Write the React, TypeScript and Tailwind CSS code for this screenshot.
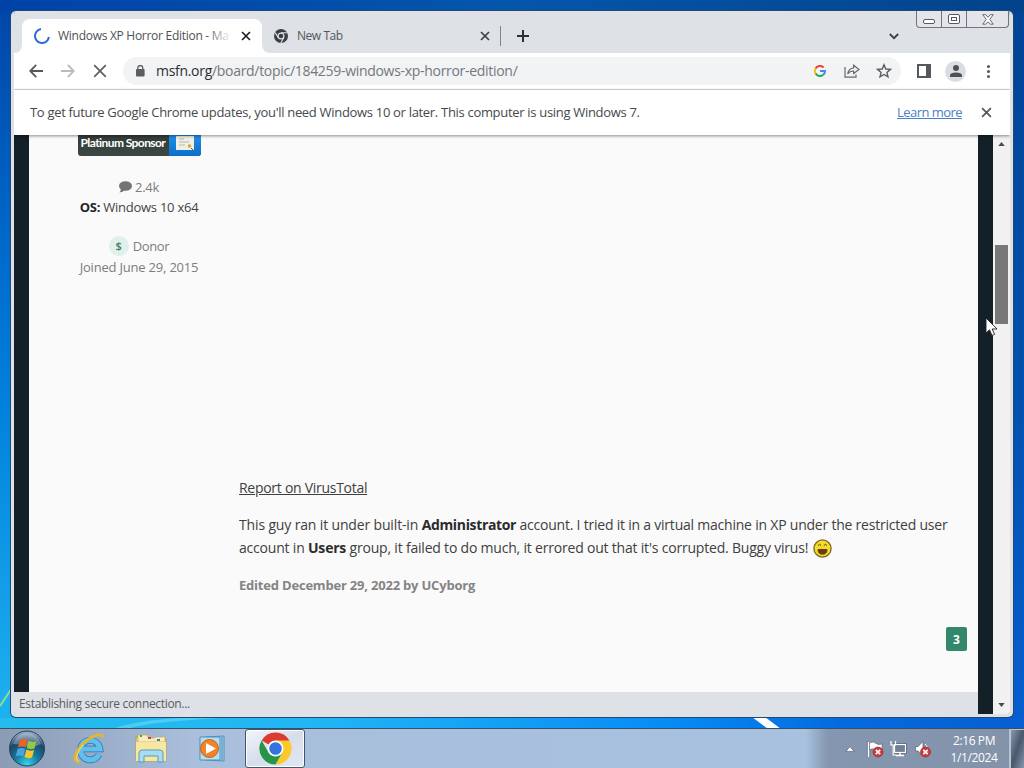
import React from "react";

const ui = "font-['Open_Sans','Noto_Sans',sans-serif]";

function Cross({ size, width, color }: { size: number; width: number; color: string }) {
  return (
    <svg width={size} height={size} viewBox="0 0 10 10" stroke={color} strokeWidth={width} fill="none" className="shrink-0">
      <path d="M1 1L9 9M9 1L1 9" />
    </svg>
  );
}

function TabStrip() {
  return (
    <div className="flex h-[42px] shrink-0 items-start bg-[#dee1e6]">
      <div className="mt-[8px] flex h-[34px] w-[6px] items-end">
        <svg width="9" height="9" viewBox="0 0 9 9" className="shrink-0">
          <path d="M0 9Q8 9 8 0H9V9Z" fill="#fff" />
        </svg>
      </div>
      <div className="ml-[2px] mt-[8px] flex h-[34px] w-[240px] items-center rounded-t-[8px] bg-white pl-[12px]">
        <svg width="16" height="16" viewBox="0 0 16 16" fill="none" stroke="#2e6bd6" strokeWidth="2" className="shrink-0">
          <path d="M7 1.1A7 7 0 1 0 14.9 9" />
        </svg>
        <div className="relative ml-[8px] w-[174px] overflow-hidden whitespace-nowrap text-[12px] leading-[18px] tracking-[-0.28px] text-[#4d5155]">
          Windows XP Horror Edition - Ma
          <div className="absolute inset-y-0 right-0 w-[26px] bg-linear-to-r from-white/0 to-white" />
        </div>
        <div className="ml-[9px] flex">
          <Cross size={10} width={1.7} color="#202124" />
        </div>
      </div>
      <svg width="9" height="9" viewBox="0 0 9 9" className="mt-[33px] shrink-0">
        <path d="M9 9Q0 9 0 0V9Z" fill="#fff" />
      </svg>
      <div className="ml-[3px] mt-[8px] flex h-[34px] w-[226px] items-center">
        <svg width="14" height="14" viewBox="0 0 14 14" className="shrink-0">
          <circle cx="7" cy="7" r="7" fill="#3c4043" />
          <circle cx="7" cy="7" r="2.9" fill="none" stroke="#dee1e6" strokeWidth="1.2" />
          <path d="M7 3.8H13.2M4.3 8.7L1.2 3.6M9.8 8.5L6.8 14" stroke="#dee1e6" strokeWidth="1.1" />
        </svg>
        <span className="ml-[9px] w-[183px] text-[12px] leading-[18px] tracking-[-0.45px] text-[#54575b]">New Tab</span>
        <Cross size={10} width={1.7} color="#3c4043" />
      </div>
      <div className="mt-[15px] h-[20px] w-px bg-[#80858b]" />
      <svg width="12" height="12" viewBox="0 0 12 12" stroke="#2d3034" strokeWidth="2" className="ml-[16px] mt-[19px]">
        <path d="M6 0V12M0 6H12" />
      </svg>
      <svg width="10" height="7" viewBox="0 0 10 7" stroke="#3c4043" strokeWidth="1.8" fill="none" className="ml-[360px] mt-[22px]">
        <path d="M0.8 1L5 5.2L9.2 1" />
      </svg>
      <div className="ml-[17px] flex h-[17px] w-[93px] rounded-b-[4px] border border-t-0 border-[#70747b] bg-[#e3e5ea]">
        <div className="flex w-[25px] items-center justify-center border-r border-[#70747b] pt-[5px]">
          <div className="h-[5px] w-[12px] rounded-[2px] border border-[#555a61] bg-white" />
        </div>
        <div className="flex w-[25px] items-center justify-center border-r border-[#70747b]">
          <div className="flex h-[10px] w-[12px] items-center justify-center rounded-[2px] border border-[#555a61] bg-white">
            <div className="h-[4px] w-[6px] border border-[#555a61]" />
          </div>
        </div>
        <div className="flex grow items-center justify-center">
          <svg width="12" height="11" viewBox="0 0 12 11" fill="#fff" stroke="#555a61" strokeWidth=".9">
            <path d="M0.8 0.7H3.7L6 3.2L8.3 0.7H11.2L7.8 5.4L11.2 10.2H8.3L6 7.7L3.7 10.2H0.8L4.2 5.4Z" />
          </svg>
        </div>
      </div>
    </div>
  );
}

function Toolbar() {
  return (
    <div className="flex h-[37px] shrink-0 items-center border-b border-[#d6d8da] bg-white">
      <svg width="14" height="14" viewBox="0 0 14 14" fill="none" stroke="#55585c" strokeWidth="1.8" className="ml-[15px]">
        <path d="M14 7H1.5M7.2 0.8L1.2 7L7.2 13.2" />
      </svg>
      <svg width="14" height="14" viewBox="0 0 14 14" fill="none" stroke="#b9bbbe" strokeWidth="1.8" className="ml-[18px]">
        <path d="M0 7H12.5M6.8 0.8L12.8 7L6.8 13.2" />
      </svg>
      <svg width="14" height="14" viewBox="0 0 14 14" stroke="#5b5e62" strokeWidth="1.7" className="ml-[18px]">
        <path d="M1.2 1.2L12.8 12.8M12.8 1.2L1.2 12.8" />
      </svg>
      <div className="ml-[16px] flex h-[28px] w-[778px] items-center rounded-full bg-[#f1f3f4]">
        <svg width="10" height="12" viewBox="0 0 10 12" className="ml-[12px] shrink-0">
          <rect x="1" y="4" width="8.6" height="7.6" rx="1" fill="#5a5d61" />
          <path d="M2.8 4.5V3A2.5 2.5 0 0 1 7.8 3V4.5" fill="none" stroke="#5a5d61" strokeWidth="1.3" />
        </svg>
        <span className="ml-[11px] w-[658px] whitespace-nowrap text-[14px] leading-[20px] tracking-[-0.3px] text-[#74787d]">
          <span className="text-[#2d2f32]">msfn.org</span>/board/topic/184259-windows-xp-horror-edition/
        </span>
        <svg width="12" height="12" viewBox="0 0 12 12" fill="none" strokeWidth="2" className="shrink-0">
          <path d="M1.6 3.4A5 5 0 0 1 9.6 2.5" stroke="#ea4335" />
          <path d="M1.6 3.4A5 5 0 0 0 1.6 8.6" stroke="#fbbc05" />
          <path d="M1.6 8.6A5 5 0 0 0 9.2 9.8" stroke="#34a853" />
          <path d="M9.2 9.8A5 5 0 0 0 11 6H6" stroke="#4285f4" />
        </svg>
        <svg width="16" height="14" viewBox="0 0 16 14" fill="none" stroke="#66696d" strokeWidth="1.2" className="ml-[18px] shrink-0">
          <path d="M1 3V13.2H12V10.5" />
          <path d="M3.6 10Q4.6 4.4 9.6 4V1.2L15 5.6L9.6 9.6V7Q5.6 7 3.6 10Z" />
        </svg>
        <svg width="16" height="16" viewBox="0 0 16 16" fill="none" stroke="#5b5e62" strokeWidth="1.4" className="ml-[16px] shrink-0">
          <path d="M8 1.8L9.8 6L14.4 6.4L10.9 9.4L12 13.9L8 11.5L4 13.9L5.1 9.4L1.6 6.4L6.2 6Z" />
        </svg>
      </div>
      <div className="ml-[16px] h-[14px] w-[14px] border-2 border-r-[5px] border-[#55585c]" />
      <div className="ml-[14px] flex h-[21px] w-[21px] items-center justify-center rounded-full bg-[#dadde2]">
        <svg width="12" height="12" viewBox="0 0 12 12" fill="#4d5156">
          <circle cx="6" cy="3" r="3" />
          <path d="M0 12V10Q0.5 7.5 6 7.4Q11.5 7.5 12 10V12Z" />
        </svg>
      </div>
      <div className="ml-[21px] flex flex-col gap-[2px]">
        <div className="size-[3px] rounded-full bg-[#55585c]" />
        <div className="size-[3px] rounded-full bg-[#55585c]" />
        <div className="size-[3px] rounded-full bg-[#55585c]" />
      </div>
    </div>
  );
}

function InfoBar() {
  return (
    <div className="relative z-10 flex h-[45px] shrink-0 items-center bg-white text-[13px] leading-[18px] shadow-[0_1px_3px_rgba(0,0,0,0.45)]">
      <span className="mb-[2px] ml-[16px] w-[867px] whitespace-nowrap tracking-[-0.31px] text-[#46494c]">
        To get future Google Chrome updates, you'll need Windows 10 or later. This computer is using Windows 7.
      </span>
      <span className="mb-[2px] w-[65px] whitespace-nowrap tracking-[-0.55px] text-[#4a80c8] underline">Learn more</span>
      <div className="ml-[19px]">
        <Cross size={11} width={1.6} color="#55585c" />
      </div>
    </div>
  );
}

function Author() {
  return (
    <div className="flex w-[200px] shrink-0 flex-col items-center text-[13px] leading-[20px] text-[#7d7d7d]">
      <div className="mt-[-3px] flex h-[24px] w-[123px] overflow-hidden rounded-b-[3px] bg-linear-to-b from-[#303a37] to-[#3d4845]">
        <span className="w-[91px] shrink-0 whitespace-nowrap pl-[3px] font-['Lato',sans-serif] text-[12px] font-bold leading-[22px] tracking-[-0.58px] text-white">Platinum Sponsor</span>
        <span className="flex grow justify-center bg-linear-to-b from-[#2394ea] to-[#0b6fca] pt-[4px]">
          <svg width="18" height="14" viewBox="0 0 18 14">
            <rect width="18" height="14" fill="#f1eee4" />
            <path d="M3 3H8M3 6H13M3 9H9" stroke="#b5b8b6" />
            <circle cx="13.5" cy="10" r="1.8" fill="#d9a53a" />
            <path d="M15 12L17 14" stroke="#555" />
          </svg>
        </span>
      </div>
      <div className="mt-[21px] flex items-center">
        <svg width="13" height="12" viewBox="0 0 13 12" fill="#747474">
          <ellipse cx="6.5" cy="5" rx="6.5" ry="4.8" />
          <path d="M2 7Q2 10 0.4 11.4Q4 11.4 6 9Z" />
        </svg>
        <span className="ml-[3px] tracking-[-0.3px]">2.4k</span>
      </div>
      <div className="tracking-[-0.25px] text-[#444]"><b className="text-[#252525]">OS:</b> Windows 10 x64</div>
      <div className="mt-[19px] flex items-center">
        <span className="flex h-[20px] w-[20px] items-center justify-center rounded-full bg-[#e1f0eb] text-[11px] font-semibold text-[#3c8266]">$</span>
        <span className="ml-[4px] tracking-[-0.35px]">Donor</span>
      </div>
      <div className="mt-px tracking-[-0.2px]">Joined June 29, 2015</div>
    </div>
  );
}

function Post() {
  return (
    <div className="flex grow flex-col whitespace-nowrap pt-[341px] text-[14px] leading-[23px] text-[#404040]">
      <div className="tracking-[-0.28px] underline">Report on VirusTotal</div>
      <div className="mt-[14px]">
        <div className="tracking-[-0.22px]"><span className="tracking-[-0.15px]">This guy ran it under built-in </span><b className="tracking-[-0.35px] text-[#2b2b2b]">Administrator</b> account. I tried it in a virtual machine in XP under the restricted user</div>
        <div className="flex items-center">
          <span className="tracking-[-0.2px]">account in <b className="text-[#2b2b2b]">Users</b> group, it failed to do much, it errored out that it's corrupted. Buggy virus!</span>
          <svg width="19" height="19" viewBox="0 0 19 19" className="ml-[5px] mt-[2px]">
            <circle cx="9.5" cy="9.5" r="8.6" fill="#f2dc28" stroke="#7c6226" strokeWidth="1.3" />
            <path d="M5 10.5H14Q14 15.2 9.5 15.2Q5 15.2 5 10.5Z" fill="#6d3a16" stroke="#6d3a16" />
            <path d="M5 6.6Q6.5 4 8.2 6.6M10.8 6.6Q12.5 4 14 6.6" fill="none" stroke="#54441b" strokeWidth="1" />
          </svg>
        </div>
      </div>
      <div className="mt-[15px] text-[13px] font-bold tracking-[-0.2px] text-[#848484]">Edited December 29, 2022 by UCyborg</div>
      <div className="mr-[11px] mt-[30px] flex h-[24px] w-[21px] items-center justify-center self-end rounded-[2px] bg-[#33886a] text-[12px] font-bold text-white">3</div>
    </div>
  );
}

function Scrollbar() {
  return (
    <div className="flex w-[17px] shrink-0 flex-col items-center bg-[#f1f1f1]">
      <svg width="7" height="4" viewBox="0 0 8 5" fill="#4a4a4a" className="mt-[7px]"><path d="M0 5L4 0L8 5Z" /></svg>
      <div className="mt-[99px] h-[79px] w-[13px] bg-[#787878]" />
      <svg width="7" height="4" viewBox="0 0 8 5" fill="#4a4a4a" className="mb-[7px] mt-auto"><path d="M0 0L4 5L8 0Z" /></svg>
    </div>
  );
}

function Tray() {
  return (
    <div className="flex grow items-center bg-linear-to-r from-[#a7c1de] via-[#8596b0] via-[10%] to-[#8293a9]">
      <svg width="10" height="6" viewBox="0 0 8 5" className="ml-[39px] shrink-0"><path d="M0.5 4.5L4 0.5L7.5 4.5Z" fill="#fff" stroke="#56637a" strokeWidth="0.6" /></svg>
      <svg width="18" height="18" viewBox="0 0 18 18" className="ml-[11px] shrink-0">
        <path d="M2.5 2V17" stroke="#fff" strokeWidth="1.8" />
        <path d="M1.3 1V17M3.9 2V17" stroke="#465268" strokeWidth="0.5" />
        <path d="M3.5 3Q7 1 9.5 3.2T16 4V10Q13 11 9.5 9.5T3.5 10Z" fill="#fff" stroke="#465268" strokeWidth="0.5" />
        <circle cx="12" cy="12" r="5" fill="#cf3a37" stroke="#8c2928" strokeWidth="0.6" />
        <path d="M9.8 9.8L14.2 14.2M14.2 9.8L9.8 14.2" stroke="#fff" strokeWidth="1.7" />
      </svg>
      <svg width="17" height="17" viewBox="0 0 17 17" className="ml-[6px] shrink-0">
        <rect x="4.5" y="4.5" width="11" height="8" fill="#758097" stroke="#3e4859" strokeWidth="2.2" />
        <rect x="4.5" y="4.5" width="11" height="8" fill="#728095" stroke="#fff" strokeWidth="1.2" />
        <path d="M10 13V15M6 15.5H14" stroke="#fff" strokeWidth="1.4" />
        <path d="M1 1V5H5.5V1M3.2 5V15H6" fill="none" stroke="#fff" strokeWidth="1.2" />
      </svg>
      <svg width="18" height="18" viewBox="0 0 18 18" className="ml-[7px] shrink-0">
        <path d="M1.5 6.5H4L9 1.5V15.5L4 11H1.5Z" fill="#fff" stroke="#556175" strokeWidth="0.7" />
        <path d="M11 4Q13 5 13 8" stroke="#fff" fill="none" />
        <circle cx="11.5" cy="12" r="5" fill="#cf3a37" stroke="#8c2928" strokeWidth="0.6" />
        <path d="M9.3 9.8L13.7 14.2M13.7 9.8L9.3 14.2" stroke="#fff" strokeWidth="1.7" />
      </svg>
      <div className="ml-[13px] w-[58px] shrink-0 whitespace-nowrap text-center text-[12px] leading-[17px] tracking-[-0.4px] text-white">
        <div>2:16 PM</div>
        <div>1/1/2024</div>
      </div>
      <div className="ml-auto h-full w-[15px] shrink-0 border-l-2 border-t border-[#b8c3d1] bg-linear-to-br from-[#8a98ab] via-[#4a586c] to-[#8796ab]" />
    </div>
  );
}

function Taskbar() {
  return (
    <div className="flex h-[40px] items-stretch overflow-hidden border-t border-[#33516b] bg-[#a7c1de] shadow-[inset_0_1px_0_#cbdcec]">
      <div className="flex w-[806px] shrink-0 items-center bg-linear-to-r from-[#8c9bb4] via-[#a9bfdc] via-[24%] to-[#a7c1de]">
        <svg width="38" height="38" viewBox="0 0 38 38" className="ml-[8px]">
          <defs>
            <radialGradient id="orb" cx=".5" cy=".95" r=".9">
              <stop offset="0" stopColor="#35d6e8" /><stop offset=".4" stopColor="#16789e" /><stop offset=".75" stopColor="#1f4668" /><stop offset="1" stopColor="#8ba8c0" />
            </radialGradient>
          </defs>
          <circle cx="19" cy="18.5" r="17.5" fill="url(#orb)" stroke="#26425e" />
          <path d="M5 14Q10 3 19 3T33 14Q26 18 19 16T5 14Z" fill="#fff" opacity=".28" />
          <path d="M12 10Q16 7.500 19.500 10L17.500 17.500Q14 15.500 10 17.500Z" fill="#e8622a" />
          <path d="M20.500 10.500Q24.500 13 28.500 11L26.500 18.500Q22 20 18.700 18Z" fill="#94c83f" />
          <path d="M9.600 19Q13.500 17 17.200 19L15.200 26.500Q11.500 24.500 7.600 26.500Z" fill="#4aa3e0" />
          <path d="M18.400 19.500Q22 21.500 26.200 20L24 27.500Q20 29 16.400 27Z" fill="#f8c52c" />
        </svg>
        <svg width="33" height="34" viewBox="0 0 33 34" className="ml-[27px]">
          <path d="M26 22.500A9.800 9.800 0 1 1 27 17H10" fill="none" stroke="#2673ae" strokeWidth="6.600" />
          <path d="M26 22.500A9.800 9.800 0 1 1 27 17H10" fill="none" stroke="#62bfec" strokeWidth="5.200" />
          <path d="M5.500 29.500C0 30 1 21 9 13C17 4 27 1 29.500 4" fill="none" stroke="#e7b52c" strokeWidth="2.800" strokeLinecap="round" />
          <path d="M5.500 29C2 28 4 20 10 13" fill="none" stroke="#fae37c" strokeWidth="1" />
        </svg>
        <svg width="34" height="32" viewBox="0 0 34 32" className="ml-[28px]">
          <path d="M2 4H12L14 6H32V28H2Z" fill="#eed784" stroke="#b79e51" />
          <path d="M4 2H14V5H20L22 4H31V9H4Z" fill="#f8edbd" stroke="#c5ab59" strokeWidth=".7" />
          <path d="M6 3H8" stroke="#4da13e" strokeWidth="2" /><path d="M14 5H17" stroke="#d2462e" strokeWidth="2" /><path d="M23 7H26" stroke="#3a7ecb" strokeWidth="2" />
          <path d="M2 9H32V28H2Z" fill="#f7e79f" />
          <path d="M5 29V20Q5 17 8 17H26Q29 17 29 20V29H24V23H10V29Z" fill="#a8dcf0" stroke="#549dbd" />
        </svg>
        <svg width="28" height="28" viewBox="0 0 28 28" className="ml-[30px]">
          <path d="M7 2L26 1V26L7 25Z" fill="#a9d5ee" stroke="#4b91bd" />
          <path d="M4 2H22V25H2V2Z" fill="#b9ddf0" stroke="#4b91bd" />
          <path d="M24 2V25" stroke="#3f8cbb" />
          <circle cx="11.500" cy="13.500" r="9" fill="#ef842a" stroke="#c76218" />
          <path d="M8 8L18 13.500L8 19Z" fill="#fff" />
        </svg>
        <div className="ml-[19px] flex h-full w-[60px] items-center justify-center rounded-[3px] border border-[#42566d] bg-linear-to-br from-[#f3f5fa] via-[#d7deeb] to-[#e1e8f2] shadow-[inset_0_0_0_1px_#fff]">
          <svg width="33" height="33" viewBox="0 0 33 33">
            <path d="M16.500 16.500L2.640 8.500A16 16 0 0 1 30.360 8.500Z" fill="#dc3b30" />
            <path d="M16.500 8.500H30.360A16 16 0 0 1 16.500 32.500L23.400 20.500Z" fill="#fcc92b" />
            <path d="M9.600 20.500L2.640 8.500A16 16 0 0 0 16.500 32.500L23.400 20.500Z" fill="#279447" />
            <circle cx="16.500" cy="16.500" r="8" fill="#fff" />
            <circle cx="16.500" cy="16.500" r="6.300" fill="#3374df" />
          </svg>
        </div>
      </div>
      <Tray />
    </div>
  );
}

export default function App() {
  return (
    <div className={`relative flex h-[768px] w-[1024px] flex-col overflow-hidden bg-linear-to-b from-[#0045a7] via-[#0078d8] via-[45%] to-[#23b9f2] ${ui}`}>
      <div className="absolute right-0 top-0 h-[728px] w-[512px] bg-linear-to-b from-[#024395] via-[#0050ac] to-[#075fd0]" />
      <div className="absolute left-0 top-0 h-[11px] w-full bg-linear-to-r from-[#0042a8] via-[#0456ab] to-[#02438b]" />
      <svg className="absolute left-0 top-[670px]" width="1024" height="60" viewBox="0 0 1024 60">
        <defs><linearGradient id="floor"><stop stopColor="#23bced" /><stop offset=".3" stopColor="#22b6f5" /><stop offset=".65" stopColor="#078cf5" /><stop offset=".82" stopColor="#046bdf" /><stop offset="1" stopColor="#075fd1" /></linearGradient></defs>
        <path d="M0 48H1024V60H0Z" fill="url(#floor)" />
        <path d="M0 36L12 18" stroke="#91df8e" strokeWidth="2" />
        <path d="M115 58Q140 50 180 48H220Q150 52 130 58Z" fill="#6ad8f5" opacity=".6" />
        <path d="M752 47H765L781 59H768Z" fill="#fff" />
      </svg>
      <div className="relative ml-[11px] mt-[11px] flex h-[706px] w-[1002px] flex-col overflow-hidden rounded-[5px] border-x-[3px] border-b-[3px] border-[#dee1e6] shadow-[0_0_0_1px_#24486f]">
        <TabStrip />
        <Toolbar />
        <InfoBar />
        <div className="flex min-h-0 grow">
          <div className="flex w-[964px] shrink-0 flex-col">
            <div className="flex min-h-0 grow">
              <div className="w-[15px] shrink-0 bg-[#142027]" />
              <div className="flex grow bg-[#fafafa] pl-[10px]">
                <Author />
                <Post />
              </div>
            </div>
            <div className="flex h-[22px] shrink-0 items-center bg-[#dee1e6] pl-[5px] pt-[2px] text-[12px] tracking-[-0.33px] text-[#585b5f]">Establishing secure connection...</div>
          </div>
          <div className="w-[15px] shrink-0 bg-[#142027]" />
          <Scrollbar />
        </div>
      </div>
      <div className="relative mt-auto"><Taskbar /></div>
      <svg className="absolute left-[985px] top-[317px]" width="14" height="20" viewBox="0 0 14 20">
        <path d="M1 1V16L4.500 12.800L7 18.500L9.600 17.300L7.200 12H12Z" fill="#fff" stroke="#222" strokeWidth=".9" />
      </svg>
    </div>
  );
}
